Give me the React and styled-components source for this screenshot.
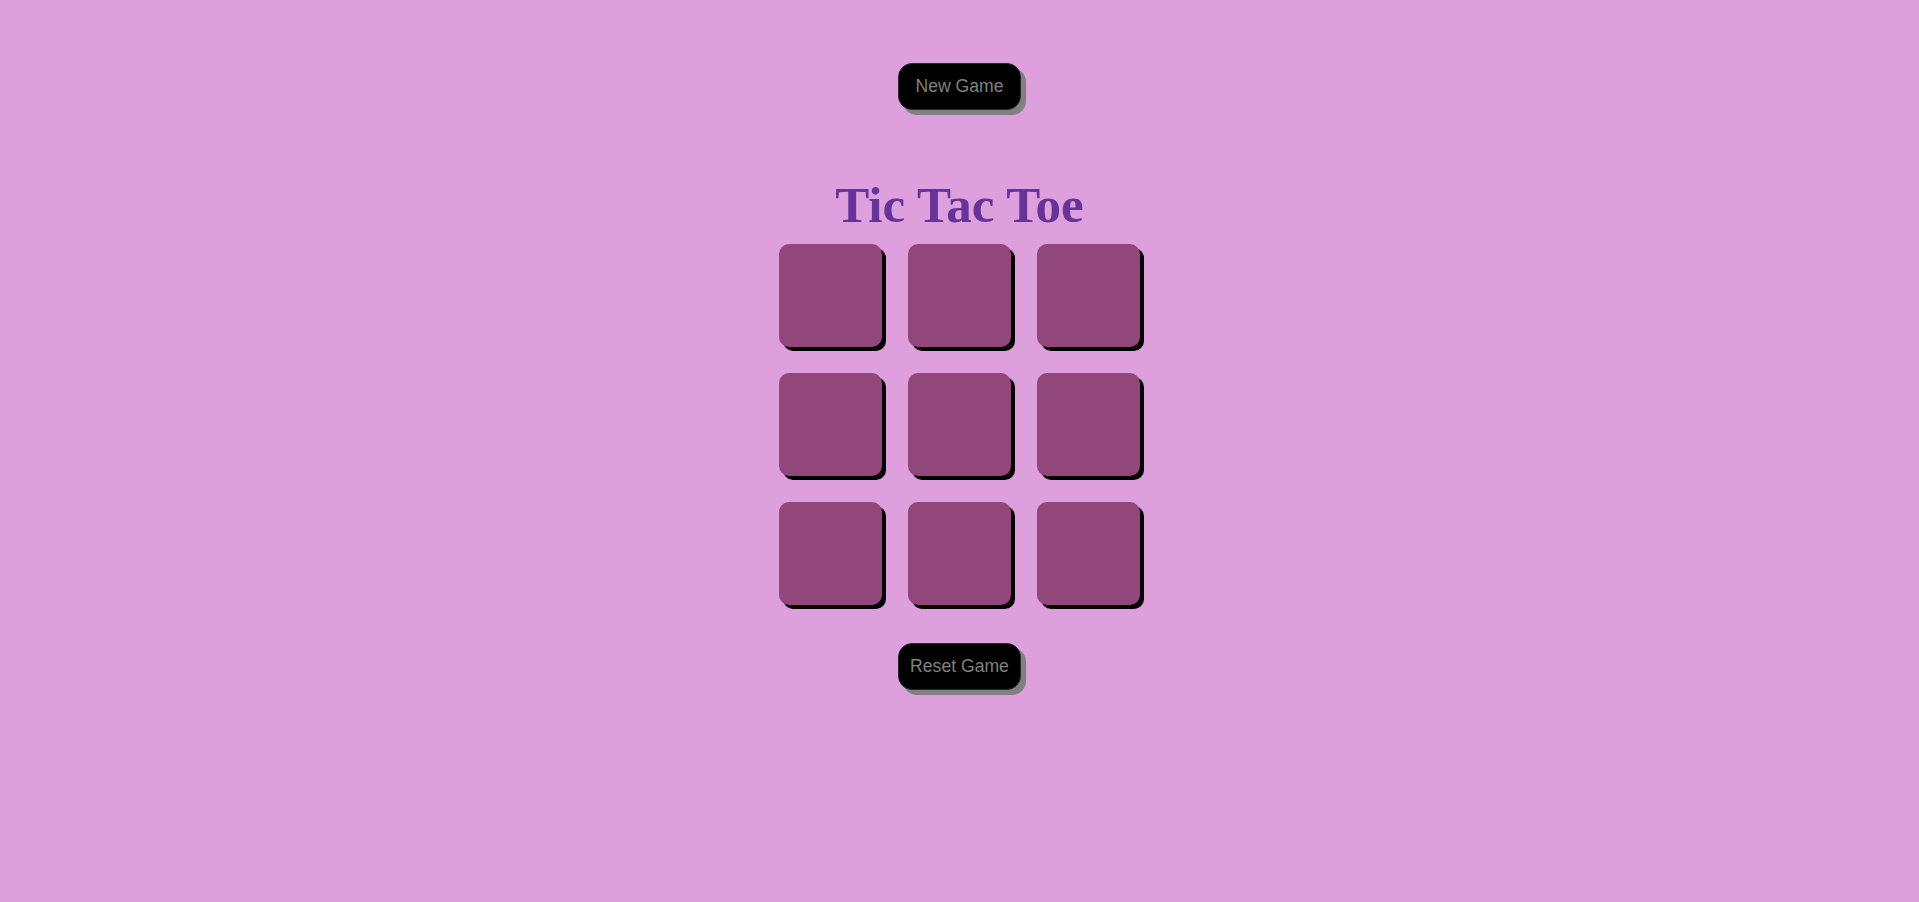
import React, { useState } from 'react';
import styled, { createGlobalStyle } from 'styled-components';

const GlobalStyle = createGlobalStyle`
  body {
    margin: 0;
    background-color: #dda0dd;
    font-family: "Liberation Sans", Arial, sans-serif;
  }
`;

const Page = styled.div`
  display: flex;
  flex-direction: column;
  align-items: center;
  padding-top: 63px;
  min-height: 100vh;
  box-sizing: border-box;
`;

const ActionButton = styled.button`
  width: 123px;
  height: 47px;
  border: 1px solid #2a2a2a;
  border-radius: 14px;
  background-color: #000;
  color: #808080;
  font-family: "Liberation Sans", Arial, sans-serif;
  font-size: 17.6px;
  box-shadow: 5px 5px #808080;
  cursor: pointer;
  margin-top: ${(p) => p.$top || 0}px;
`;

const Title = styled.h1`
  margin: 66px 0 10px;
  font-family: "Liberation Serif", "Times New Roman", serif;
  font-size: 51px;
  font-weight: bold;
  color: #663399;
`;

const Board = styled.div`
  display: grid;
  grid-template-columns: repeat(3, 103px);
  grid-auto-rows: 103px;
  gap: 26px;
`;

const Cell = styled.button`
  border: none;
  border-radius: 10px;
  background-color: #914779;
  box-shadow: 4px 4px #000;
  color: #fff;
  font-family: "Liberation Sans", Arial, sans-serif;
  font-size: 48px;
  cursor: pointer;
`;

const App = () => {
  const [cells, setCells] = useState(Array(9).fill(''));
  const [turn, setTurn] = useState('O');

  const play = (i) => {
    if (cells[i]) return;
    const next = [...cells];
    next[i] = turn;
    setCells(next);
    setTurn(turn === 'O' ? 'X' : 'O');
  };

  const reset = () => {
    setCells(Array(9).fill(''));
    setTurn('O');
  };

  return (
    <>
      <GlobalStyle />
      <Page>
        <ActionButton onClick={reset}>New Game</ActionButton>
        <Title>Tic Tac Toe</Title>
        <Board>
          {cells.map((c, i) => (
            <Cell key={i} onClick={() => play(i)}>
              {c}
            </Cell>
          ))}
        </Board>
        <ActionButton $top={38} onClick={reset}>
          Reset Game
        </ActionButton>
      </Page>
    </>
  );
};

export default App;
